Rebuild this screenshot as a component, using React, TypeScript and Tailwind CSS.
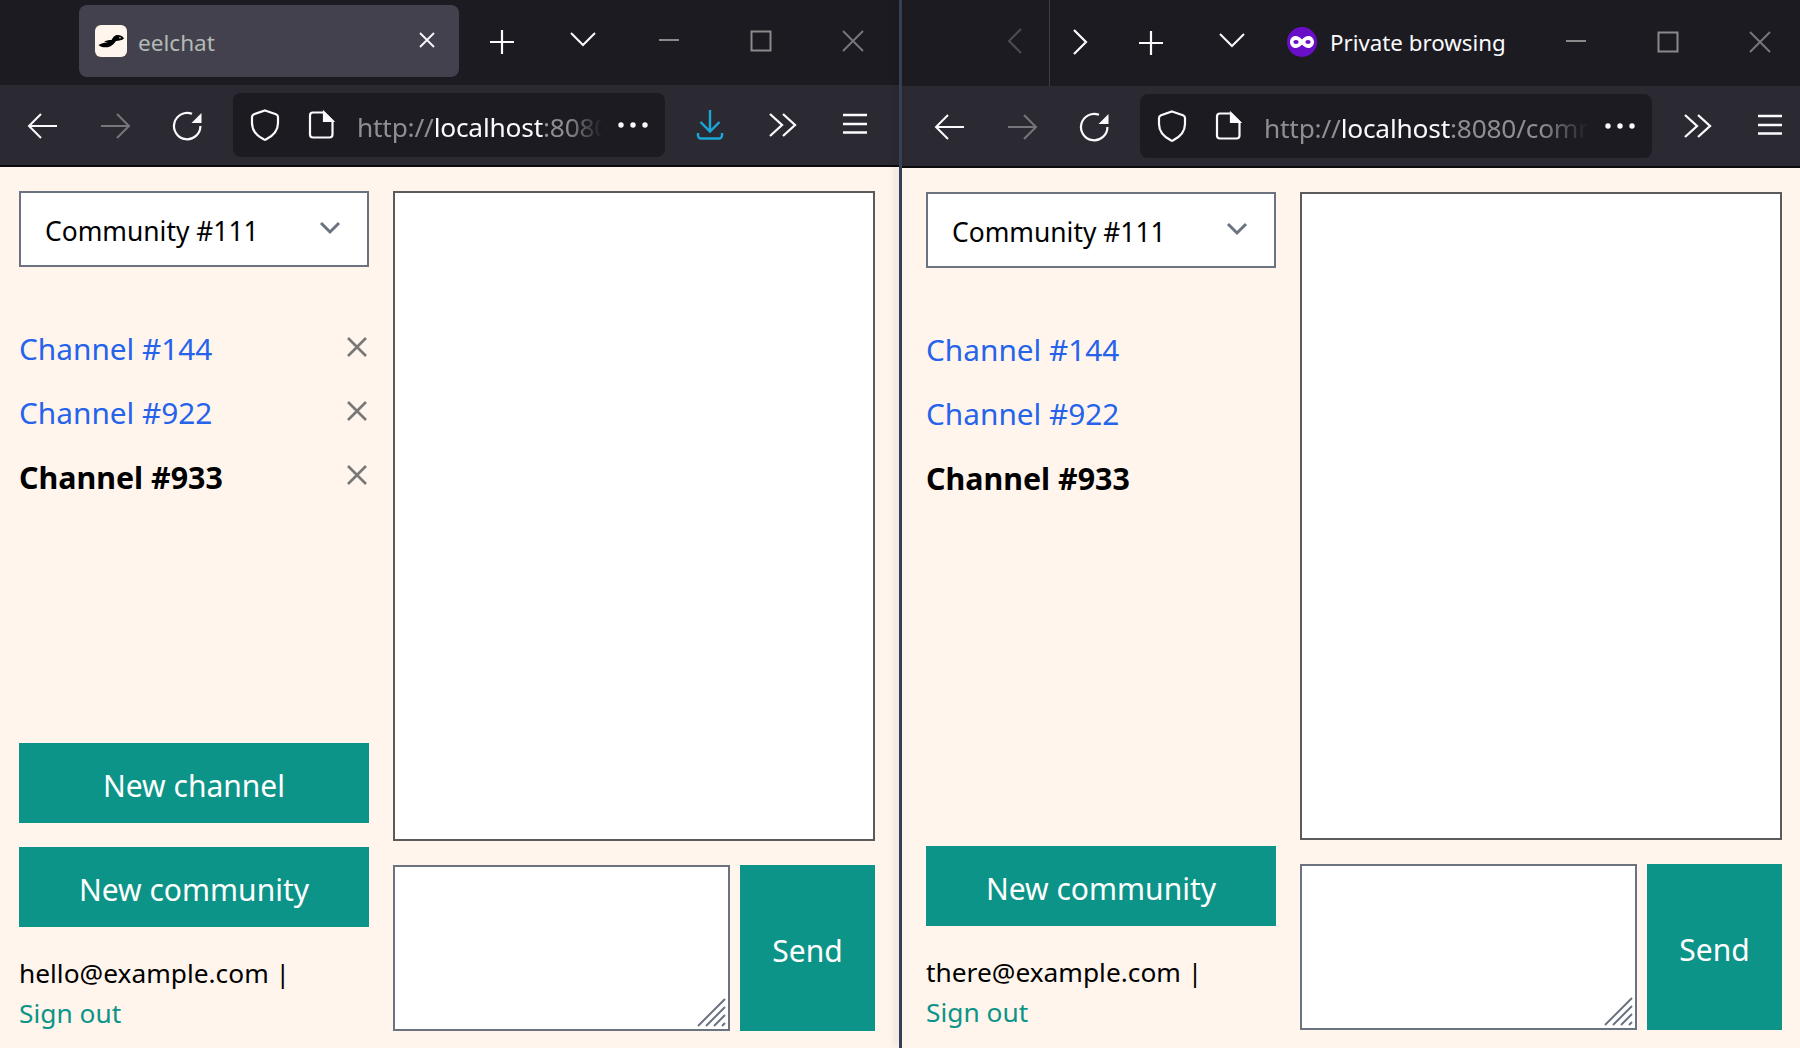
import React from "react";

const ff = "font-['Noto_Sans','Open_Sans',sans-serif]";

function I({ w = 32, h = 32, vb = "0 0 32 32", c = "#fbfbfe", sw = 2, className = "", children }: any) {
  return (
    <svg width={w} height={h} viewBox={vb} fill="none" stroke={c} strokeWidth={sw} className={"shrink-0 " + className}>
      {children}
    </svg>
  );
}

const Back = () => (
  <I><path d="M30 16H2M14 4 2 16l12 12" /></I>
);
const Forward = () => (
  <I c="#76757c"><path d="M2 16h28M18 4l12 12-12 12" /></I>
);
const Reload = () => (
  <I sw={2.2}>
    <path d="M21 3.800A13.200 13.200 0 1 0 29.400 16" />
    <path d="M30.500 3v10h-10z" fill="#fbfbfe" stroke="none" />
  </I>
);
const Shield = () => (
  <I sw={2.2}>
    <path d="M16 1.500 27 5.200c1.300.5 2 1.300 2 2.800v6c0 8-6 13.500-12.200 16.600a2 2 0 0 1-1.600 0C9 27.500 3 22 3 14V8c0-1.500.7-2.300 2-2.800z" />
  </I>
);
const Page = () => (
  <I sw={2.2}>
    <path d="M8 3.500h11l8.500 8.500v13.500a3 3 0 0 1-3 3H8a3 3 0 0 1-3-3v-19a3 3 0 0 1 3-3z" strokeLinejoin="round" />
    <path d="M19 3.500l8.500 8.500H19z" fill="#fbfbfe" />
  </I>
);
const Dots = () => (
  <I w={30} h={8} vb="0 0 30 8" c="none">
    <circle cx="3" cy="4" r="2.700" fill="#fbfbfe" />
    <circle cx="15" cy="4" r="2.700" fill="#fbfbfe" />
    <circle cx="27" cy="4" r="2.700" fill="#fbfbfe" />
  </I>
);
const Download = () => (
  <I c="#1aa7d6" sw={2.400}>
    <path d="M16 1v21M6.500 13 16 22.500 25.500 13" />
    <path d="M4 24v2.500a3 3 0 0 0 3 3h18a3 3 0 0 0 3-3V24" />
  </I>
);
const More = () => (
  <I sw={2.300}>
    <path d="M4 5l12 11L4 27M17 5l12 11-12 11" />
  </I>
);
const Menu = () => (
  <I sw={2.400} c="#fbfbfe">
    <path d="M4 6h24M4 15h24M4 23.500h24" />
  </I>
);
const Plus = () => (
  <I sw={2.200}>
    <path d="M16 4v24M4 16h24" />
  </I>
);
const Chev = () => (
  <I sw={2}>
    <path d="M4 10l12 12 12-12" />
  </I>
);
const WinControls = () => (
  <div className="flex">
    <div className="w-[92px] flex justify-center pt-[25px]">
      <I c="#8a8a8a" sw={2}><path d="M6 15h20" /></I>
    </div>
    <div className="w-[92px] flex justify-center pt-[25px]">
      <I c="#8a8a8a" sw={2}><path d="M6.500 6.500h19v19h-19z" /></I>
    </div>
    <div className="w-[92px] flex justify-center pt-[25px]">
      <I c="#77767c" sw={2}><path d="M6 6l20 20M26 6 6 26" /></I>
    </div>
  </div>
);

function Eel() {
  return (
    <svg width="32" height="32" viewBox="0 0 32 32" className="block">
      <rect width="32" height="32" rx="6" fill="#fff5ec" />
      <path
        d="M3.500 20C7 18 10 17.500 13 17.500L9 16.500C12 15 14.500 15 16.500 15C18 12.500 19.500 10 22.500 10C25.500 10 28 11.500 29 13.500C27 15.500 24 15.500 21 16C19.500 18 18 20 15 21.500C11 23 6 22.500 3.500 20Z"
        fill="#000"
      />
      <circle cx="25" cy="12.800" r="0.800" fill="#fff5ec" />
    </svg>
  );
}

function Private() {
  return (
    <svg width="30" height="30" viewBox="0 0 30 30" className="shrink-0">
      <circle cx="15" cy="15" r="15" fill="#6a0fc8" />
      <path d="M8.500 9c2.500 0 4.500 1.500 6.500 3.500 2-2 4-3.500 6.500-3.500 3 0 5.500 2.700 5.500 6s-2.500 6-5.500 6c-2.500 0-4.500-1.500-6.500-3.500-2 2-4 3.500-6.500 3.500C5.500 21 3 18.300 3 15s2.500-6 5.500-6z" fill="#fff" />
      <ellipse cx="9" cy="15" rx="2.600" ry="2" fill="#6a0fc8" />
      <ellipse cx="21" cy="15" rx="2.600" ry="2" fill="#6a0fc8" />
    </svg>
  );
}

function Url({ text, width }: { text: string; width: string }) {
  return (
    <div className={"h-[64px] bg-[#1c1b22] rounded-lg flex items-center pl-[16px] " + width}>
      <Shield />
      <div className="w-[24px] shrink-0" />
      <Page />
      <div className={"ml-[20px] pt-[5px] flex-1 min-w-0 overflow-hidden whitespace-nowrap text-[26.300px] tracking-[-0.2px] [mask-image:linear-gradient(to_right,black_84%,transparent_98%)] " + ff}>
        <span className="text-[#8f8f93]">http://</span>
        <span className="text-[#fbfbfe]">localhost</span>
        <span className="text-[#8f8f93]">{text}</span>
      </div>
      <div className="w-[10px] shrink-0" />
      <Dots />
      <div className="w-[17px] shrink-0" />
    </div>
  );
}

function Slot({ children, className = "" }: any) {
  return <div className={"w-[72px] flex justify-center shrink-0 " + className}>{children}</div>;
}

function Page_({ email, showNewChannel, showClose, pbSide, pbMain, pad }: any) {
  const channels = [
    { n: "Channel #144" },
    { n: "Channel #922" },
    { n: "Channel #933", active: true },
  ];
  return (
    <div className={"flex-1 min-h-0 bg-[#fff5ec] flex pt-[24px] gap-[24px] " + pad + " " + ff}>
      <div className={"w-[350px] shrink-0 flex flex-col " + pbSide}>
        <div className="h-[76px] shrink-0 bg-white border-2 border-[#6b7280] flex items-center pl-[24px] pr-[25px] justify-between text-[26.400px] text-black">
          <span className="pt-[6px]">Community #111</span>
          <svg width="24" height="24" viewBox="0 0 24 24" fill="none" stroke="#6b7280" strokeWidth="3" className="-mt-[2px]">
            <path d="M3 7l9 9 9-9" />
          </svg>
        </div>
        <div className="mt-[50px] flex flex-col">
          {channels.map((c) => (
            <div key={c.n} className="h-[64px] flex items-center justify-between">
              <span className={c.active ? "text-[30.400px] pt-[2px] font-bold text-black" : "text-[29.800px] text-[#2563eb]"}>{c.n}</span>
              {showClose && (
                <svg width="20" height="22" viewBox="0 0 20 22" fill="none" stroke="#777" strokeWidth="2.600" className="mr-[2px] -mt-[5px]">
                  <path d="M1 2l18 18M19 2 1 20" />
                </svg>
              )}
            </div>
          ))}
        </div>
        <div className="flex-1" />
        {showNewChannel && (
          <button className="h-[80px] shrink-0 mb-[24px] pt-[4px] bg-[#0d9488] text-white text-[30px]">New channel</button>
        )}
        <button className="h-[80px] shrink-0 pt-[4px] bg-[#0d9488] text-white text-[30px]">New community</button>
        <div className="mt-[26px] text-[26.300px] leading-[40px] text-black">
          <div>{email} |</div>
          <div className="text-[#0d9488]">Sign out</div>
        </div>
      </div>
      <div className={"flex-1 min-w-0 flex flex-col gap-[24px] " + pbMain}>
        <div className="flex-1 bg-white border-2 border-[#5b5b5b]" />
        <div className="h-[166px] shrink-0 flex gap-[10px]">
          <div className="relative flex-1 bg-white border-2 border-[#6b7280]">
            <svg width="30" height="30" viewBox="0 0 30 30" stroke="#6b7280" strokeWidth="2" className="absolute right-[1px] bottom-[1px]">
              <path d="M1 28 28 1M9 28 28 9M17 28 28 17M25 28l3-3" />
            </svg>
          </div>
          <button className="w-[135px] shrink-0 pt-[4px] bg-[#0d9488] text-white text-[30px]">Send</button>
        </div>
      </div>
    </div>
  );
}

export default function App() {
  return (
    <div className={"w-[1800px] h-[1048px] flex bg-[#1c1b22] overflow-hidden " + ff}>
      {/* left window */}
      <div className="w-[899px] flex flex-col shrink-0 relative">
        <div className="h-[85px] bg-[#1c1b22] flex relative shrink-0">
          <div className="ml-[79px] mt-[5px] w-[380px] h-[72px] rounded-lg bg-[#42414d] flex items-center pl-[16px]">
            <Eel />
            <span className={"ml-[11px] pt-[4px] text-[22.600px] text-[#b3bab6] " + ff}>eelchat</span>
            <div className="flex-1" />
            <div className="mr-[23px] -mt-[2px]">
              <svg width="18" height="18" viewBox="0 0 18 18" stroke="#fbfbfe" strokeWidth="1.800">
                <path d="M2 2l14 14M16 2 2 16" />
              </svg>
            </div>
          </div>
          <div className="ml-[11px] w-[64px] flex justify-center pt-[26px]"><Plus /></div>
          <div className="ml-[17px] w-[64px] flex justify-center pt-[23px]"><Chev /></div>
          <div className="ml-[8px]"><WinControls /></div>
        </div>
        <div className="h-[82px] shrink-0 bg-[#2b2a33] border-b-2 border-[#0c0c0d] flex items-center pl-[7px]">
          <Slot className="pt-[2px]"><Back /></Slot>
          <Slot className="pt-[2px]"><Forward /></Slot>
          <Slot className="pt-[2px]"><Reload /></Slot>
          <div className="ml-[10px]"><Url text=":8080/community" width="w-[432px]" /></div>
          <Slot className="ml-[9px]"><Download /></Slot>
          <Slot><More /></Slot>
          <Slot className="pl-[1px]"><Menu /></Slot>
        </div>
        <Page_ email="hello@example.com" showNewChannel showClose pbSide="pb-[15px]" pbMain="pb-[17px]" pad="pl-[19px] pr-[24px]" />
      </div>
      <div className="w-[3px] shrink-0 bg-[#334155] shadow-[-4px_0_6px_rgba(0,0,0,0.12)] z-10" />
      {/* right window */}
      <div className="flex-1 flex flex-col min-w-0">
        <div className="h-[86px] bg-[#1c1b22] flex shrink-0 items-start">
          <div className="ml-[80px] w-[69px] flex justify-center pt-[25px]">
            <I c="#4d4c52" sw={2}><path d="M20 4 8 16l12 12" /></I>
          </div>
          <div className="w-px h-[86px] bg-[#3f3e44] -ml-[2px]" />
          <div className="w-[56px] flex justify-center pt-[26px]">
            <I sw={2.200}><path d="M12 4l12 12-12 12" /></I>
          </div>
          <div className="ml-[9px] w-[72px] flex justify-center pt-[27px]"><Plus /></div>
          <div className="ml-[9px] w-[72px] flex justify-center pt-[24px]"><Chev /></div>
          <div className="ml-[19px] pt-[27px]"><Private /></div>
          <span className="ml-[13px] mt-[26px] text-[22.300px] text-[#fbfbfe] whitespace-nowrap">Private browsing</span>
          <div className="flex-1" />
          <div className="pt-[1px] mr-[-6px]"><WinControls /></div>
        </div>
        <div className="h-[82px] shrink-0 bg-[#2b2a33] border-b-2 border-[#0c0c0d] flex items-center pl-[12px]">
          <Slot className="pt-[2px]"><Back /></Slot>
          <Slot className="pt-[2px]"><Forward /></Slot>
          <Slot className="pt-[2px]"><Reload /></Slot>
          <div className="ml-[10px]"><Url text=":8080/community/111" width="w-[512px]" /></div>
          <Slot className="ml-[9px]"><More /></Slot>
          <Slot className="pl-[1px]"><Menu /></Slot>
        </div>
        <Page_ email="there@example.com" pbSide="pb-[16px]" pbMain="pb-[18px]" pad="pl-[24px] pr-[18px]" />
      </div>
    </div>
  );
}
